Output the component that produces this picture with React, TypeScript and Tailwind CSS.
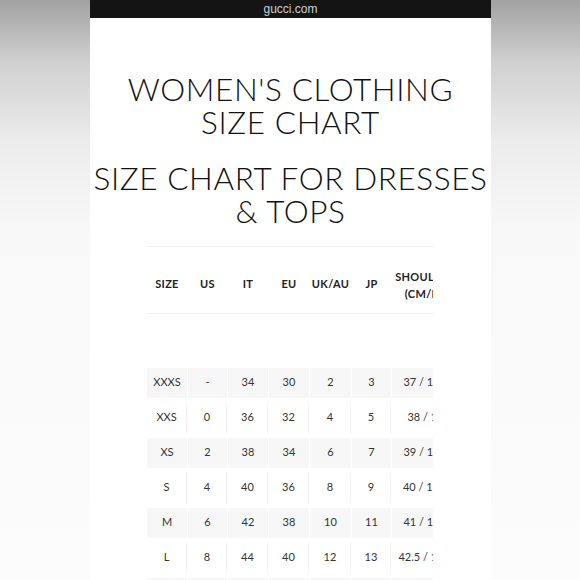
import React from 'react';

type Row = { size: string; us: string; it: string; eu: string; uk: string; jp: string; shoulder: string };

const rows: Row[] = [
  { size: 'XXXS', us: '-', it: '34', eu: '30', uk: '2', jp: '3', shoulder: '37 / 14.6' },
  { size: 'XXS', us: '0', it: '36', eu: '32', uk: '4', jp: '5', shoulder: '38 / 15' },
  { size: 'XS', us: '2', it: '38', eu: '34', uk: '6', jp: '7', shoulder: '39 / 15.4' },
  { size: 'S', us: '4', it: '40', eu: '36', uk: '8', jp: '9', shoulder: '40 / 15.7' },
  { size: 'M', us: '6', it: '42', eu: '38', uk: '10', jp: '11', shoulder: '41 / 16.1' },
  { size: 'L', us: '8', it: '44', eu: '40', uk: '12', jp: '13', shoulder: '42.5 / 16.7' },
  { size: 'XL', us: '10', it: '46', eu: '42', uk: '14', jp: '15', shoulder: '44 / 17.3' },
];

// column widths, with a 1px gap between cells
const widths = ['w-[40px]', 'w-[39px]', 'w-[40px]', 'w-[40px]', 'w-[41px]', 'w-[39px]', 'w-[68px]'];

const SizeRow: React.FC<{ row: Row; shaded: boolean }> = ({ row, shaded }) => {
  const cells = [row.size, row.us, row.it, row.eu, row.uk, row.jp, row.shoulder];
  return (
    <div className="flex h-[30px] gap-[1px]">
      {cells.map((c, i) => (
        <div
          key={i}
          className={`${widths[i]} shrink-0 flex items-center justify-center whitespace-nowrap ${
            shaded ? 'bg-[#f7f7f7]' : 'border-r border-[#f3f3f3]'
          }`}
        >
          {c}
        </div>
      ))}
    </div>
  );
};

export default function App() {
  const headers = ['SIZE', 'US', 'IT', 'EU', 'UK/AU', 'JP'];

  return (
    <div className="h-[580px] w-[580px] overflow-hidden bg-[linear-gradient(180deg,#a2a2a2_0px,#cfcfcf_60px,#ececec_140px,#f8f8f8_230px,#fcfcfc_580px)]">
      <div className="ml-[90px] w-[401px] h-full bg-white flex flex-col">
        <div className="h-[19px] bg-[#141414] flex items-center justify-center text-[12px] leading-none text-[#cfcfcf] font-['Liberation_Sans',sans-serif]">
          gucci.com
        </div>

        <div className="font-['Lato',sans-serif] font-light text-[#111] text-center text-[31.5px] leading-[33px] tracking-[0.6px]">
          <h1 className="mt-[55px]">
            WOMEN'S CLOTHING
            <br />
            SIZE CHART
          </h1>
          <h2 className="mt-[23px]">
            SIZE CHART FOR DRESSES
            <br />
            &amp; TOPS
          </h2>
        </div>

        <div className="ml-[57px] w-[286px] overflow-hidden mt-[18px] font-['Lato',sans-serif] text-[11px] text-[#333]">
          <div className="w-[340px]">
            <div className="h-[68px] border-t border-b border-[#f0f0f0] flex gap-[1px] items-center pt-[10px] font-bold text-[11px] tracking-[0.3px] text-[#222]">
              {headers.map((h, i) => (
                <div key={h} className={`${widths[i]} shrink-0 text-center`}>
                  {h}
                </div>
              ))}
              <div className={`${widths[6]} shrink-0 text-center leading-[17px] whitespace-nowrap`}>
                SHOULDER
                <br />
                (CM/IN)
              </div>
            </div>
            <div className="mt-[54px] flex flex-col gap-[5px]">
              {rows.map((r, i) => (
                <SizeRow key={r.size} row={r} shaded={i % 2 === 0} />
              ))}
            </div>
          </div>
        </div>
      </div>
    </div>
  );
}
